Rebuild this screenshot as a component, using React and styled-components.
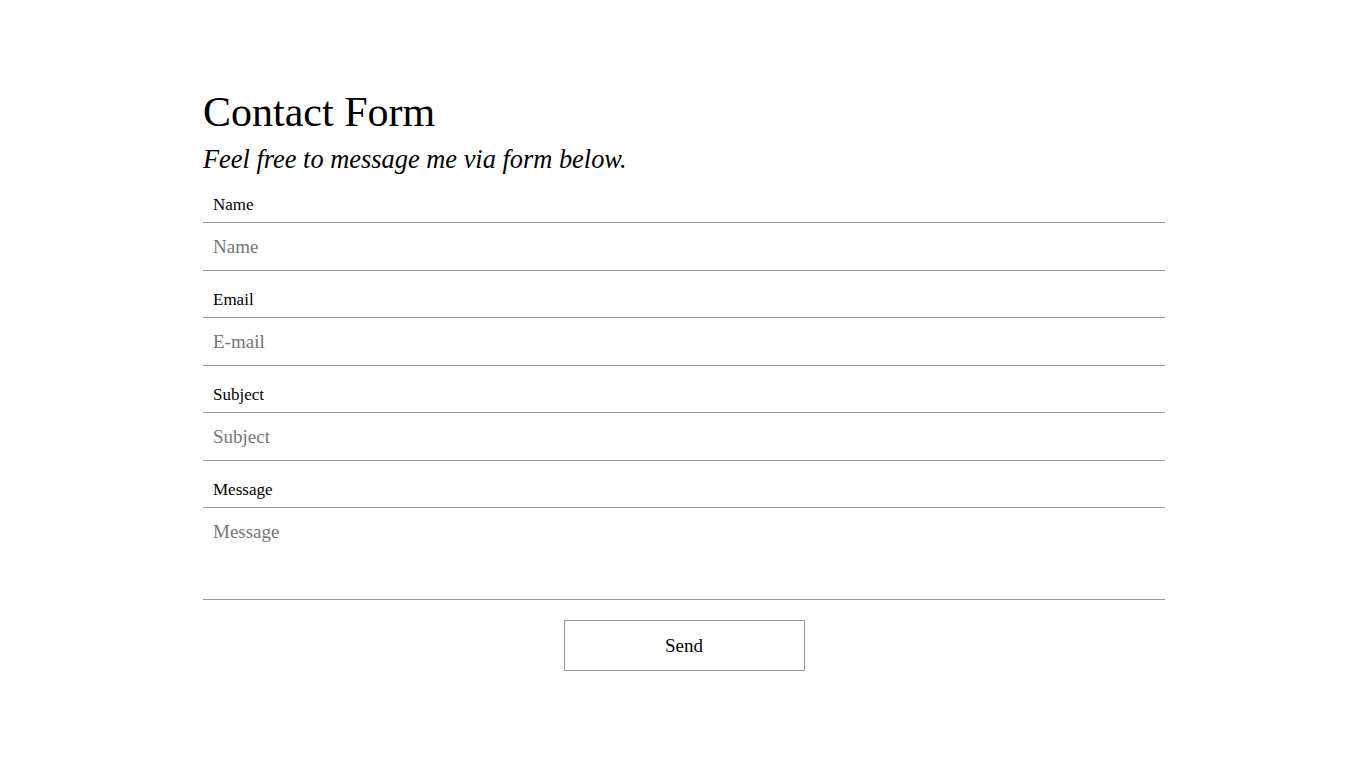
import React from "react";
import styled, {createGlobalStyle} from "styled-components";

const GlobalStyle = createGlobalStyle`
  html, body {
    margin: 0;
    padding: 0;
    background: #ffffff;
  }
  body {
    font-family: "Liberation Serif", "Times New Roman", serif;
    color: #000000;
  }
`;

const Page = styled.main`
  width: 962px;
  margin: 0 auto;
  padding-top: 87px;
`;

const Title = styled.h1`
  margin: 0;
  font-size: 42px;
  line-height: 50px;
  font-weight: 400;
`;

const Subtitle = styled.p`
  margin: 6px 0 0;
  font-size: 26.4px;
  line-height: 33px;
  font-style: italic;
`;

const Form = styled.form`
  display: flex;
  flex-direction: column;
`;

const Label = styled.label`
  display: block;
  padding: 18px 10px 6px;
  font-size: 17px;
  line-height: 22px;
`;

const Input = styled.input`
  box-sizing: border-box;
  width: 100%;
  height: 49px;
  padding: 0 10px;
  margin: 0;
  border: none;
  border-top: 1px solid #999999;
  border-bottom: 1px solid #999999;
  font-family: inherit;
  font-size: 19px;
  color: #000000;
  background: transparent;
  outline: none;

  &::placeholder {
    color: #777777;
  }
`;

const TextArea = styled.textarea`
  box-sizing: border-box;
  width: 100%;
  height: 93px;
  padding: 12px 10px;
  margin: 0;
  border: none;
  border-top: 1px solid #999999;
  border-bottom: 1px solid #999999;
  font-family: inherit;
  font-size: 19px;
  line-height: 24px;
  resize: none;
  background: transparent;
  outline: none;

  &::placeholder {
    color: #777777;
  }
`;

const Actions = styled.div`
  display: flex;
  justify-content: center;
  margin-top: 20px;
`;

const SendButton = styled.button`
  width: 241px;
  height: 51px;
  border: 1px solid #999999;
  background: #ffffff;
  font-family: inherit;
  font-size: 19px;
  color: #000000;
  cursor: pointer;
`;

const fields = [
    {id: "name", label: "Name", placeholder: "Name"},
    {id: "email", label: "Email", placeholder: "E-mail"},
    {id: "subject", label: "Subject", placeholder: "Subject"},
];

const App = () => {
    return (
        <>
            <GlobalStyle/>
            <Page>
                <Title>Contact Form</Title>
                <Subtitle>Feel free to message me via form below.</Subtitle>
                <Form onSubmit={e => e.preventDefault()}>
                    {fields.map(f => (
                        <React.Fragment key={f.id}>
                            <Label htmlFor={f.id}>{f.label}</Label>
                            <Input id={f.id} placeholder={f.placeholder}/>
                        </React.Fragment>
                    ))}
                    <Label htmlFor="message">Message</Label>
                    <TextArea id="message" placeholder="Message"/>
                    <Actions>
                        <SendButton type="submit">Send</SendButton>
                    </Actions>
                </Form>
            </Page>
        </>
    );
};

export default App;
